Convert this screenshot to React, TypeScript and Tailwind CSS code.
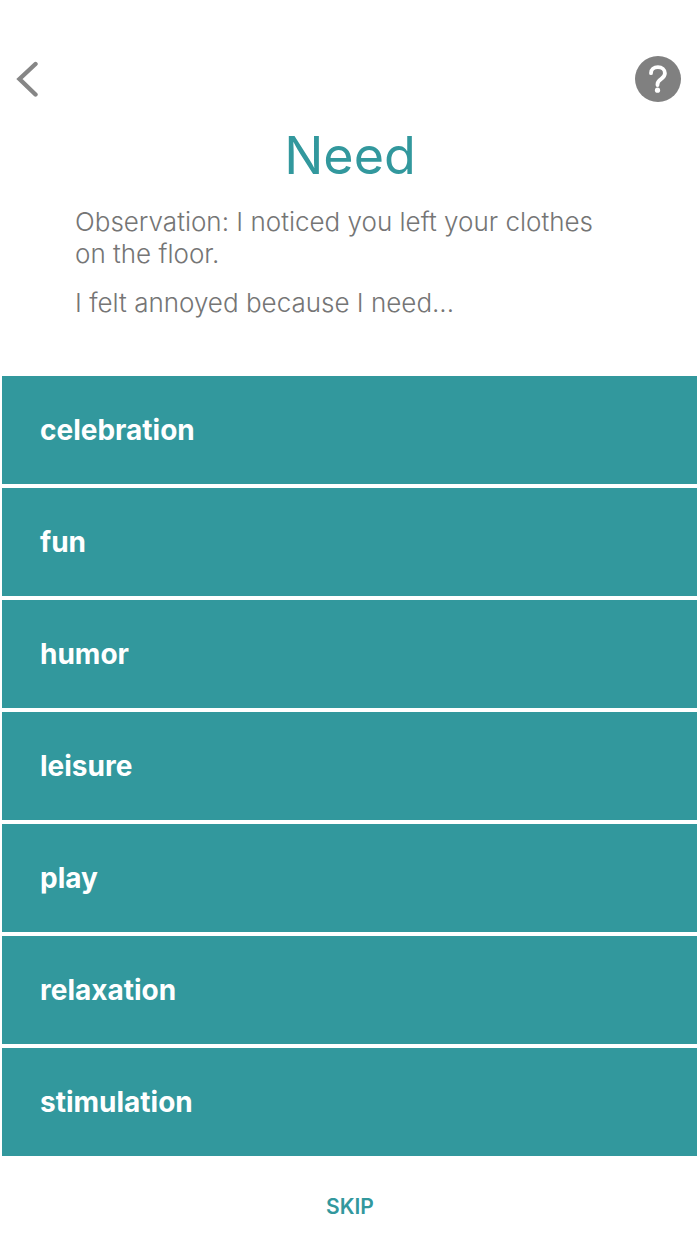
const needs = ['celebration', 'fun', 'humor', 'leisure', 'play', 'relaxation', 'stimulation'];

const App = () => {
  return (
    <div className="min-h-screen bg-white font-['Inter',sans-serif]">
      <header className="flex items-center justify-between pt-14 pl-4 pr-[19px]">
        <button type="button" aria-label="Back">
          <svg className="w-6 h-9" viewBox="0 0 24 36" fill="none" stroke="#868686" strokeWidth="4.4">
            <path d="M19.5 3 L3.5 18 L19.5 33.5" strokeLinecap="round" strokeLinejoin="miter" />
          </svg>
        </button>
        <button type="button" aria-label="Help">
          <svg className="w-[46px] h-[46px]" viewBox="0 0 46 46" fill="none">
            <circle cx="23" cy="23" r="23" fill="#808080" />
            <path
              d="M16 17.2C16 13.5 19 11.2 22.9 11.2C27 11.2 29.9 13.7 29.9 17.3C29.9 20.2 28.3 21.7 26 23.2C23.6 24.8 22.5 26 22.5 28.3V29"
              stroke="#fff"
              strokeWidth="3.8"
              strokeLinecap="round"
            />
            <circle cx="22.5" cy="34.2" r="2.6" fill="#fff" />
          </svg>
        </button>
      </header>

      <main>
        <h1 className="mt-6 text-center text-[52px] leading-[60px] font-normal text-[#32989d]">Need</h1>
        <div className="mt-5 px-[75px] text-[26px] leading-8 font-light text-[#757575]">
          <p>Observation: I noticed you left your clothes on the floor.</p>
          <p className="mt-[17px]">I felt annoyed because I need...</p>
        </div>

        <ul className="mt-[57px] ml-[2px] mr-[3px] flex flex-col gap-1">
          {needs.map((need) => (
            <li key={need}>
              <button
                type="button"
                className="w-full h-[108px] px-[38px] text-left text-[28px] font-bold text-white bg-[#32989d]"
              >
                {need}
              </button>
            </li>
          ))}
        </ul>
      </main>

      <footer className="flex justify-center pt-[35px] pb-5">
        <button type="button" className="text-[21px] leading-8 font-semibold text-[#32989d]">
          SKIP
        </button>
      </footer>
    </div>
  );
};

export default App;
